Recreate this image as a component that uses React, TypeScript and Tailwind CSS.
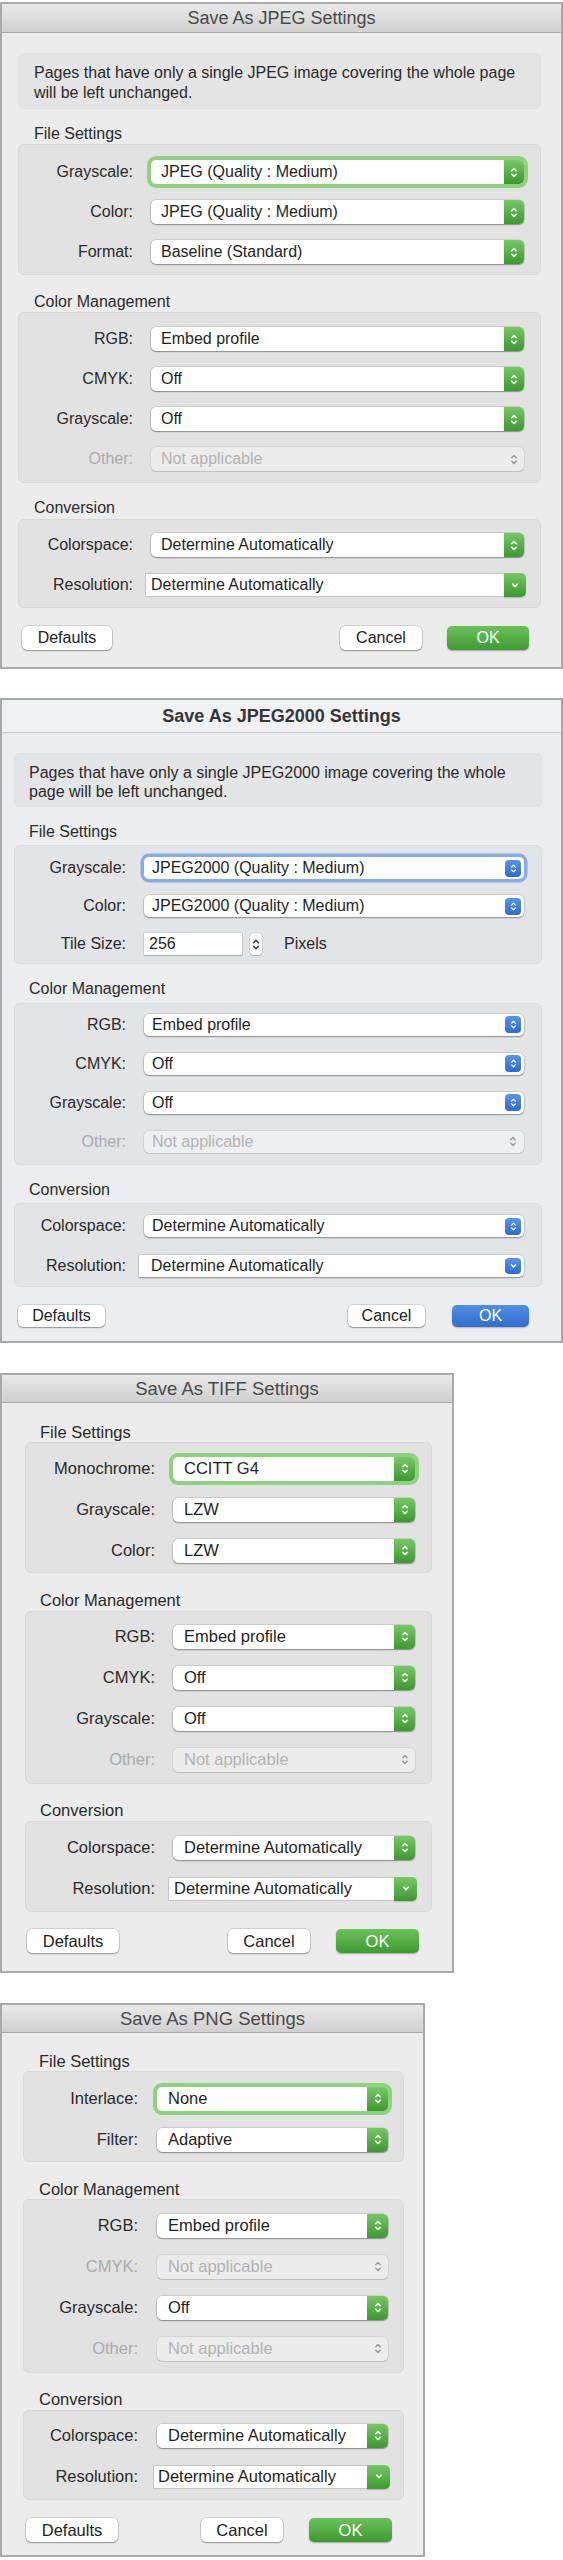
import React from "react";

type Cls = { className?: string };

function UpDown({ className = "" }: Cls) {
  return (
    <svg viewBox="0 0 8 14" className={className} fill="none" stroke="currentColor" strokeWidth={1.6} strokeLinecap="round" strokeLinejoin="round" aria-hidden="true">
      <path d="M1.6 5.2 4 2.8 6.4 5.2" />
      <path d="M1.6 8.8 4 11.2 6.4 8.8" />
    </svg>
  );
}

function DownChevron({ className = "" }: Cls) {
  return (
    <svg viewBox="0 0 8 14" className={className} fill="none" stroke="currentColor" strokeWidth={1.7} strokeLinecap="round" strokeLinejoin="round" aria-hidden="true">
      <path d="M1.6 5.6 4 8.2 6.4 5.6" />
    </svg>
  );
}

const popupShadow = "shadow-[0_0_0_0.5px_rgba(0,0,0,0.2),0_1px_1.5px_rgba(0,0,0,0.32)]";

/* Aqua-style pop-up button with a green stepper cap */
function GreenSelect({ value, focus = false, h, pl, aw }: { value: string; focus?: boolean; h: string; pl: string; aw: string }) {
  return (
    <div className={`flex min-w-0 flex-1 items-stretch rounded-[5px] bg-white shadow-[0_0_0_0.5px_rgba(0,0,0,0.2),0_1px_1.5px_rgba(0,0,0,0.32)] ${h} ${focus ? "ring-[4px] ring-[#8fd27e]" : ""}`}>
      <span className={`flex flex-1 items-center whitespace-nowrap text-[#1f1f1f] ${pl}`}>{value}</span>
      <span className={`flex items-center justify-center rounded-r-[5px] bg-linear-to-b from-[#76c964] to-[#3c982f] text-white ${aw}`}>
        <UpDown className="h-[13px] w-[8px]" />
      </span>
    </div>
  );
}

function GreenCombo({ value, h, pl, aw, ml }: { value: string; h: string; pl: string; aw: string; ml: string }) {
  return (
    <div className={`-mr-[2px] flex min-w-0 flex-1 items-stretch ${ml} ${h}`}>
      <span className={`flex flex-1 items-center whitespace-nowrap border border-r-0 border-[#c4c4c4] bg-white text-[#1f1f1f] ${pl}`}>{value}</span>
      <span className={`flex items-center justify-center rounded-r-[5px] bg-linear-to-b from-[#76c964] to-[#3c982f] text-white shadow-[0_1px_1px_rgba(0,0,0,0.2)] ${aw}`}>
        <DownChevron className="h-[13px] w-[8px]" />
      </span>
    </div>
  );
}

function DisabledSelect({ value, h, pl, aw, bg }: { value: string; h: string; pl: string; aw: string; bg: string }) {
  return (
    <div className={`flex min-w-0 flex-1 items-stretch rounded-[5px] shadow-[0_0_0_0.5px_rgba(0,0,0,0.13),0_1px_1px_rgba(0,0,0,0.1)] ${bg} ${h}`}>
      <span className={`flex flex-1 items-center whitespace-nowrap text-[#b3b3b3] ${pl}`}>{value}</span>
      <span className={`flex items-center justify-center text-[#9c9c9c] ${aw}`}>
        <UpDown className="h-[13px] w-[8px]" />
      </span>
    </div>
  );
}

/* Big Sur style pop-up with an inset blue cap */
function BlueSelect({ value, focus = false }: { value: string; focus?: boolean }) {
  return (
    <div className={`flex h-[22px] min-w-0 flex-1 items-center rounded-[5px] bg-white ${popupShadow} ${focus ? "ring-[3.5px] ring-[#86ade7]" : ""}`}>
      <span className="flex-1 whitespace-nowrap pl-[8px] text-[#1f1f1f]">{value}</span>
      <span className="mr-[3px] flex h-[17px] w-[16px] items-center justify-center rounded-[4px] bg-linear-to-b from-[#5895e8] to-[#2f6bcb] text-white">
        <UpDown className="h-[11px] w-[7px]" />
      </span>
    </div>
  );
}

function BlueCombo({ value }: { value: string }) {
  return (
    <div className={`-ml-[5px] flex h-[22px] min-w-0 flex-1 items-center rounded-r-[5px] bg-white ${popupShadow}`}>
      <span className="flex-1 whitespace-nowrap pl-[12px] text-[#1f1f1f]">{value}</span>
      <span className="mr-[3px] flex h-[16px] w-[16px] items-center justify-center rounded-[4px] bg-linear-to-b from-[#5895e8] to-[#2f6bcb] text-white">
        <DownChevron className="h-[12px] w-[7px]" />
      </span>
    </div>
  );
}

function Row({ label, rowH, labelW, disabled = false, children }: { label: string; rowH: string; labelW: string; disabled?: boolean; children: React.ReactNode }) {
  return (
    <div className={`flex items-center ${rowH}`}>
      <span className={`shrink-0 whitespace-nowrap text-right ${labelW} ${disabled ? "text-[#ababab]" : "text-[#2a2a2a]"}`}>{label}</span>
      {children}
    </div>
  );
}

function Group({ className, children }: { className: string; children: React.ReactNode }) {
  return <div className={`rounded-[6px] border ${className}`}>{children}</div>;
}

function Header({ className, children }: { className: string; children: React.ReactNode }) {
  return <div className={`leading-[20px] text-[#2a2a2a] ${className}`}>{children}</div>;
}

function PlainButton({ label, className }: { label: string; className: string }) {
  return (
    <button type="button" className={`flex items-center justify-center rounded-[5px] bg-white text-[#222] shadow-[0_0_0_0.5px_rgba(0,0,0,0.22),0_1px_1.5px_rgba(0,0,0,0.3)] ${className}`}>
      {label}
    </button>
  );
}

function GreenTitle({ title, className }: { title: string; className: string }) {
  return (
    <div className={`flex items-center justify-center border-b border-[#a9a9a9] bg-linear-to-b from-[#e9e9e9] to-[#d0d0d0] text-[#4a4a4a] ${className}`}>
      {title}
    </div>
  );
}

function JpegDialog() {
  const row = "h-[40px]";
  const lw = "w-[114px] mr-[18px]";
  const sel = { h: "h-[24px]", pl: "pl-[10px]", aw: "w-[20px]" };
  const group = "border-[#d8d8d8] bg-[#e2e2e2] pr-[16px]";
  return (
    <section className="w-[563px] border-2 border-[#a9a9a9] bg-[#ececec] text-[16px]">
      <GreenTitle title="Save As JPEG Settings" className="h-[29px] text-[18px]" />
      <div className="pb-[17px] pl-[16px] pr-[20px] pt-[20px]">
        <div className="h-[56px] rounded-[6px] border border-[#dedede] bg-[#e4e4e4] pl-[15px] pt-[9px] leading-[20px] text-[#2a2a2a]">
          <div className="whitespace-nowrap">Pages that have only a single JPEG image covering the whole page</div>
          <div className="whitespace-nowrap">will be left unchanged.</div>
        </div>

        <Header className="mt-[15px] h-[20px] pl-[16px]">File Settings</Header>
        <Group className={`${group} pb-[2px] pt-[7px]`}>
          <Row label="Grayscale:" rowH={row} labelW={lw}><GreenSelect value="JPEG (Quality : Medium)" focus {...sel} /></Row>
          <Row label="Color:" rowH={row} labelW={lw}><GreenSelect value="JPEG (Quality : Medium)" {...sel} /></Row>
          <Row label="Format:" rowH={row} labelW={lw}><GreenSelect value="Baseline (Standard)" {...sel} /></Row>
        </Group>

        <Header className="mt-[17px] h-[20px] pl-[16px]">Color Management</Header>
        <Group className={`${group} pb-[3px] pt-[6px]`}>
          <Row label="RGB:" rowH={row} labelW={lw}><GreenSelect value="Embed profile" {...sel} /></Row>
          <Row label="CMYK:" rowH={row} labelW={lw}><GreenSelect value="Off" {...sel} /></Row>
          <Row label="Grayscale:" rowH={row} labelW={lw}><GreenSelect value="Off" {...sel} /></Row>
          <Row label="Other:" rowH={row} labelW={lw} disabled><DisabledSelect value="Not applicable" bg="bg-[#ececec]" {...sel} /></Row>
        </Group>

        <Header className="mt-[15px] h-[21px] pl-[16px]">Conversion</Header>
        <Group className={`${group} pb-[2px] pt-[5px]`}>
          <Row label="Colorspace:" rowH={row} labelW={lw}><GreenSelect value="Determine Automatically" {...sel} /></Row>
          <Row label="Resolution:" rowH={row} labelW={lw}><GreenCombo value="Determine Automatically" h="h-[24px]" pl="pl-[5px]" aw="w-[22px]" ml="-ml-[6px]" /></Row>
        </Group>

        <div className="mt-[18px] flex items-center">
          <PlainButton label="Defaults" className="ml-[4px] h-[24px] w-[90px]" />
          <div className="flex-1" />
          <PlainButton label="Cancel" className="h-[24px] w-[82px]" />
          <button type="button" className="ml-[25px] mr-[12px] flex h-[24px] w-[82px] items-center justify-center rounded-[5px] bg-linear-to-b from-[#6cc25a] to-[#3d9a30] text-white shadow-[0_1px_1.5px_rgba(0,0,0,0.3)]">OK</button>
        </div>
      </div>
    </section>
  );
}

function Jpeg2000Dialog() {
  const lw = "w-[111px] mr-[18px]";
  const group = "border-[#dadbdd] bg-[#e3e4e6] pr-[17px]";
  return (
    <section className="mt-[29px] w-[563px] border-2 border-[#a6a8aa] bg-[#ecedee] text-[16px]">
      <div className="flex h-[33px] items-center justify-center border-b border-[#c9cacc] bg-[#f0f1f2] text-[18px] font-bold text-[#363636]">
        Save As JPEG2000 Settings
      </div>
      <div className="pb-[14px] pl-[12px] pr-[19px] pt-[20px]">
        <div className="h-[54px] rounded-[6px] border border-[#dfe0e2] bg-[#e4e5e7] pl-[14px] pt-[9px] leading-[19px] text-[#2a2a2a]">
          <div className="whitespace-nowrap">Pages that have only a single JPEG2000 image covering the whole</div>
          <div className="whitespace-nowrap">page will be left unchanged.</div>
        </div>

        <Header className="mt-[15px] h-[23px] pl-[15px]">File Settings</Header>
        <Group className={`${group} pb-0 pt-[3px]`}>
          <Row label="Grayscale:" rowH="h-[38px]" labelW={lw}><BlueSelect value="JPEG2000 (Quality : Medium)" focus /></Row>
          <Row label="Color:" rowH="h-[38px]" labelW={lw}><BlueSelect value="JPEG2000 (Quality : Medium)" /></Row>
          <Row label="Tile Size:" rowH="h-[38px]" labelW={lw}>
            <div className="flex items-center">
              <span className="flex h-[22px] w-[98px] items-center bg-white pl-[5px] text-[#1f1f1f] shadow-[0_0_0_0.5px_rgba(0,0,0,0.18),0_1px_1px_rgba(0,0,0,0.15)]">256</span>
              <span className="ml-[8px] flex h-[22px] w-[12px] items-center justify-center rounded-[4px] bg-white text-[#3a3a3a] shadow-[0_0_0_0.5px_rgba(0,0,0,0.15),0_1px_1px_rgba(0,0,0,0.2)]">
                <UpDown className="h-[15px] w-[8px]" />
              </span>
              <span className="ml-[22px] text-[#2a2a2a]">Pixels</span>
            </div>
          </Row>
        </Group>

        <Header className="mt-[15px] h-[24px] pl-[15px]">Color Management</Header>
        <Group className={`${group} pb-[3px] pt-[1px]`}>
          <Row label="RGB:" rowH="h-[39px]" labelW={lw}><BlueSelect value="Embed profile" /></Row>
          <Row label="CMYK:" rowH="h-[39px]" labelW={lw}><BlueSelect value="Off" /></Row>
          <Row label="Grayscale:" rowH="h-[39px]" labelW={lw}><BlueSelect value="Off" /></Row>
          <Row label="Other:" rowH="h-[39px]" labelW={lw} disabled>
            <DisabledSelect value="Not applicable" bg="bg-[#eeeff0]" h="h-[22px]" pl="pl-[8px]" aw="w-[22px]" />
          </Row>
        </Group>

        <Header className="mt-[15px] h-[23px] pl-[15px]">Conversion</Header>
        <Group className={`${group} pb-0 pt-[2px]`}>
          <Row label="Colorspace:" rowH="h-[40px]" labelW={lw}><BlueSelect value="Determine Automatically" /></Row>
          <Row label="Resolution:" rowH="h-[40px]" labelW={lw}><BlueCombo value="Determine Automatically" /></Row>
        </Group>

        <div className="mt-[18px] flex items-center">
          <PlainButton label="Defaults" className="ml-[4px] h-[22px] w-[87px]" />
          <div className="flex-1" />
          <PlainButton label="Cancel" className="h-[22px] w-[77px]" />
          <button type="button" className="ml-[27px] mr-[13px] flex h-[22px] w-[77px] items-center justify-center rounded-[5px] bg-linear-to-b from-[#4f8fe5] to-[#316ecd] text-white shadow-[0_1px_1.5px_rgba(0,0,0,0.25)]">OK</button>
        </div>
      </div>
    </section>
  );
}

function TiffDialog() {
  const row = "h-[41px]";
  const lw = "w-[129px] mr-[18px]";
  const sel = { h: "h-[24px]", pl: "pl-[11px]", aw: "w-[21px]" };
  const group = "border-[#d8d8d8] bg-[#e2e2e2] pr-[16px]";
  return (
    <section className="mt-[30px] w-[454px] border-2 border-[#a9a9a9] bg-[#ececec] text-[16.5px]">
      <GreenTitle title="Save As TIFF Settings" className="h-[28px] text-[18.5px]" />
      <div className="pb-[18px] pl-[23px] pr-[20px] pt-[19px]">
        <Header className="h-[20px] pl-[15px]">File Settings</Header>
        <Group className={`${group} pb-[1px] pt-[5px]`}>
          <Row label="Monochrome:" rowH={row} labelW={lw}><GreenSelect value="CCITT G4" focus {...sel} /></Row>
          <Row label="Grayscale:" rowH={row} labelW={lw}><GreenSelect value="LZW" {...sel} /></Row>
          <Row label="Color:" rowH={row} labelW={lw}><GreenSelect value="LZW" {...sel} /></Row>
        </Group>

        <Header className="mt-[17px] h-[21px] pl-[15px]">Color Management</Header>
        <Group className={`${group} pb-[3px] pt-[4px]`}>
          <Row label="RGB:" rowH={row} labelW={lw}><GreenSelect value="Embed profile" {...sel} /></Row>
          <Row label="CMYK:" rowH={row} labelW={lw}><GreenSelect value="Off" {...sel} /></Row>
          <Row label="Grayscale:" rowH={row} labelW={lw}><GreenSelect value="Off" {...sel} /></Row>
          <Row label="Other:" rowH={row} labelW={lw} disabled><DisabledSelect value="Not applicable" bg="bg-[#ececec]" {...sel} /></Row>
        </Group>

        <Header className="mt-[16px] h-[21px] pl-[15px]">Conversion</Header>
        <Group className={`${group} pb-[2px] pt-[5px]`}>
          <Row label="Colorspace:" rowH={row} labelW={lw}><GreenSelect value="Determine Automatically" {...sel} /></Row>
          <Row label="Resolution:" rowH={row} labelW={lw}><GreenCombo value="Determine Automatically" h="h-[24px]" pl="pl-[5px]" aw="w-[23px]" ml="-ml-[5px]" /></Row>
        </Group>

        <div className="mt-[17px] flex items-center">
          <PlainButton label="Defaults" className="ml-[2px] h-[24px] w-[92px]" />
          <div className="flex-1" />
          <PlainButton label="Cancel" className="h-[24px] w-[82px]" />
          <button type="button" className="ml-[26px] mr-[13px] flex h-[24px] w-[83px] items-center justify-center rounded-[5px] bg-linear-to-b from-[#6cc25a] to-[#3d9a30] text-white shadow-[0_1px_1.5px_rgba(0,0,0,0.3)]">OK</button>
        </div>
      </div>
    </section>
  );
}

function PngDialog() {
  const row = "h-[41px]";
  const lw = "w-[114px] mr-[19px]";
  const sel = { h: "h-[24px]", pl: "pl-[11px]", aw: "w-[21px]" };
  const group = "border-[#d8d8d8] bg-[#e2e2e2] pr-[15px]";
  return (
    <section className="mt-[30px] w-[425px] border-2 border-[#a9a9a9] bg-[#ececec] text-[16.5px]">
      <GreenTitle title="Save As PNG Settings" className="h-[28px] text-[18.5px]" />
      <div className="pb-[13px] pl-[21px] pr-[19px] pt-[18px]">
        <Header className="h-[20px] pl-[16px]">File Settings</Header>
        <Group className={`${group} pb-[1px] pt-[6px]`}>
          <Row label="Interlace:" rowH={row} labelW={lw}><GreenSelect value="None" focus {...sel} /></Row>
          <Row label="Filter:" rowH={row} labelW={lw}><GreenSelect value="Adaptive" {...sel} /></Row>
        </Group>

        <Header className="mt-[17px] h-[20px] pl-[16px]">Color Management</Header>
        <Group className={`${group} pb-[3px] pt-[5px]`}>
          <Row label="RGB:" rowH={row} labelW={lw}><GreenSelect value="Embed profile" {...sel} /></Row>
          <Row label="CMYK:" rowH={row} labelW={lw} disabled><DisabledSelect value="Not applicable" bg="bg-[#ececec]" {...sel} /></Row>
          <Row label="Grayscale:" rowH={row} labelW={lw}><GreenSelect value="Off" {...sel} /></Row>
          <Row label="Other:" rowH={row} labelW={lw} disabled><DisabledSelect value="Not applicable" bg="bg-[#ececec]" {...sel} /></Row>
        </Group>

        <Header className="mt-[16px] h-[21px] pl-[16px]">Conversion</Header>
        <Group className={`${group} pb-[2px] pt-[4px]`}>
          <Row label="Colorspace:" rowH={row} labelW={lw}><GreenSelect value="Determine Automatically" {...sel} /></Row>
          <Row label="Resolution:" rowH={row} labelW={lw}><GreenCombo value="Determine Automatically" h="h-[24px]" pl="pl-[4px]" aw="w-[23px]" ml="-ml-[4px]" /></Row>
        </Group>

        <div className="mt-[18px] flex items-center">
          <PlainButton label="Defaults" className="ml-[3px] h-[24px] w-[92px]" />
          <div className="flex-1" />
          <PlainButton label="Cancel" className="h-[24px] w-[82px]" />
          <button type="button" className="ml-[26px] mr-[12px] flex h-[24px] w-[83px] items-center justify-center rounded-[5px] bg-linear-to-b from-[#6cc25a] to-[#3d9a30] text-white shadow-[0_1px_1.5px_rgba(0,0,0,0.3)]">OK</button>
        </div>
      </div>
    </section>
  );
}

export default function App() {
  return (
    <div className="h-[2560px] w-[563px] overflow-hidden bg-white pt-[2px] font-['Liberation_Sans','Helvetica_Neue',Arial,sans-serif] antialiased">
      <JpegDialog />
      <Jpeg2000Dialog />
      <TiffDialog />
      <PngDialog />
    </div>
  );
}
